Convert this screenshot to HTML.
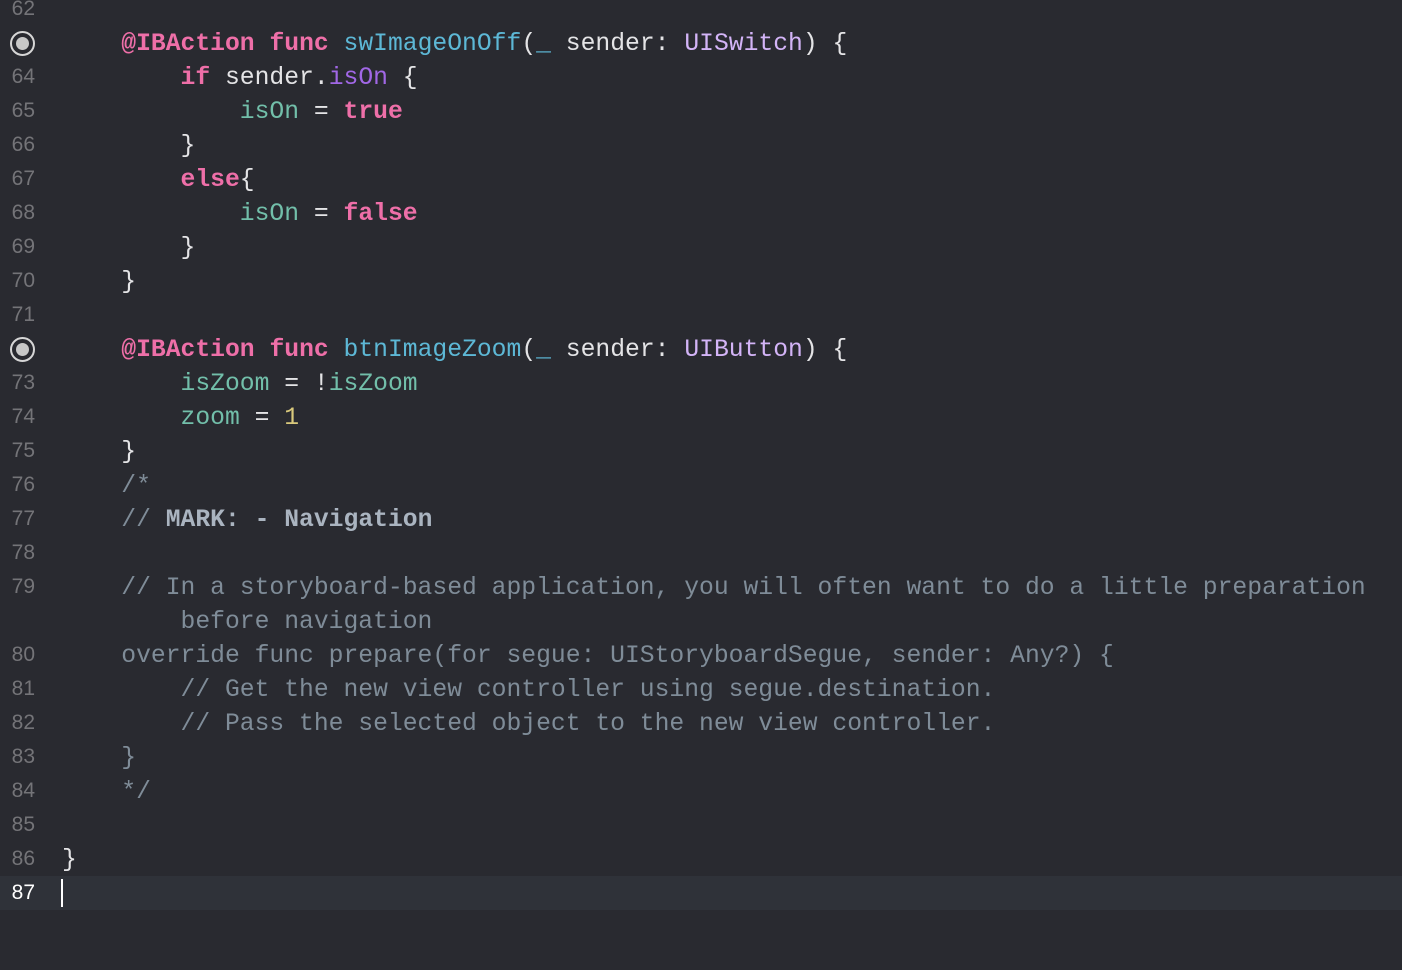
<!DOCTYPE html>
<html><head><meta charset="utf-8"><style>
body{margin:0;width:1402px;height:970px;background:#292a30;overflow:hidden;font-family:"Liberation Mono",monospace;}
.row{position:absolute;left:0;width:1402px;height:34px;line-height:36px;font-size:24.7px;white-space:pre;color:#e4e4e6;}
.cur{background:#2f3239;}
.n{position:absolute;right:1367px;font-family:"Liberation Sans",sans-serif;font-size:21px;color:#747478;line-height:34px;}
.cur .n{color:#fff;}
.c{position:absolute;left:62px;}
.k{color:#ee6fa8;font-weight:bold}
.f{color:#5db8d6}
.t{color:#d3b4f7}
.p{color:#a167e6}
.v{color:#72bfaa}
.num{color:#d9c97c}
.cm{color:#7f8c98}
.mk{color:#aab4c0;font-weight:bold}
.bp{position:absolute;left:10px;top:5px;width:25px;height:25px;border:2.5px solid #d6d6d6;border-radius:50%;box-sizing:border-box;}
.bp:after{content:"";position:absolute;left:3.5px;top:3.5px;width:13px;height:13px;border-radius:50%;background:#c8c8c8;}
.caret{position:absolute;left:61px;top:3px;width:2px;height:28px;background:#fff;}
</style></head><body>
<div class="row" style="top:-8px"><span class="n">62</span></div>
<div class="row" style="top:26px"><span class="bp"></span><span class="c">    <span class="k">@IBAction</span> <span class="k">func</span> <span class="f">swImageOnOff</span>(<span class="f">_</span> sender: <span class="t">UISwitch</span>) {</span></div>
<div class="row" style="top:60px"><span class="n">64</span><span class="c">        <span class="k">if</span> sender.<span class="p">isOn</span> {</span></div>
<div class="row" style="top:94px"><span class="n">65</span><span class="c">            <span class="v">isOn</span> = <span class="k">true</span></span></div>
<div class="row" style="top:128px"><span class="n">66</span><span class="c">        }</span></div>
<div class="row" style="top:162px"><span class="n">67</span><span class="c">        <span class="k">else</span>{</span></div>
<div class="row" style="top:196px"><span class="n">68</span><span class="c">            <span class="v">isOn</span> = <span class="k">false</span></span></div>
<div class="row" style="top:230px"><span class="n">69</span><span class="c">        }</span></div>
<div class="row" style="top:264px"><span class="n">70</span><span class="c">    }</span></div>
<div class="row" style="top:298px"><span class="n">71</span></div>
<div class="row" style="top:332px"><span class="bp"></span><span class="c">    <span class="k">@IBAction</span> <span class="k">func</span> <span class="f">btnImageZoom</span>(<span class="f">_</span> sender: <span class="t">UIButton</span>) {</span></div>
<div class="row" style="top:366px"><span class="n">73</span><span class="c">        <span class="v">isZoom</span> = !<span class="v">isZoom</span></span></div>
<div class="row" style="top:400px"><span class="n">74</span><span class="c">        <span class="v">zoom</span> = <span class="num">1</span></span></div>
<div class="row" style="top:434px"><span class="n">75</span><span class="c">    }</span></div>
<div class="row" style="top:468px"><span class="n">76</span><span class="c cm">    /*</span></div>
<div class="row" style="top:502px"><span class="n">77</span><span class="c cm">    // <span class="mk">MARK: - Navigation</span></span></div>
<div class="row" style="top:536px"><span class="n">78</span></div>
<div class="row" style="top:570px"><span class="n">79</span><span class="c cm">    // In a storyboard-based application, you will often want to do a little preparation</span></div>
<div class="row" style="top:604px"><span class="c cm">        before navigation</span></div>
<div class="row" style="top:638px"><span class="n">80</span><span class="c cm">    override func prepare(for segue: UIStoryboardSegue, sender: Any?) {</span></div>
<div class="row" style="top:672px"><span class="n">81</span><span class="c cm">        // Get the new view controller using segue.destination.</span></div>
<div class="row" style="top:706px"><span class="n">82</span><span class="c cm">        // Pass the selected object to the new view controller.</span></div>
<div class="row" style="top:740px"><span class="n">83</span><span class="c cm">    }</span></div>
<div class="row" style="top:774px"><span class="n">84</span><span class="c cm">    */</span></div>
<div class="row" style="top:808px"><span class="n">85</span></div>
<div class="row" style="top:842px"><span class="n">86</span><span class="c">}</span></div>
<div class="row cur" style="top:876px"><span class="n">87</span><span class="caret"></span></div>
</body></html>
